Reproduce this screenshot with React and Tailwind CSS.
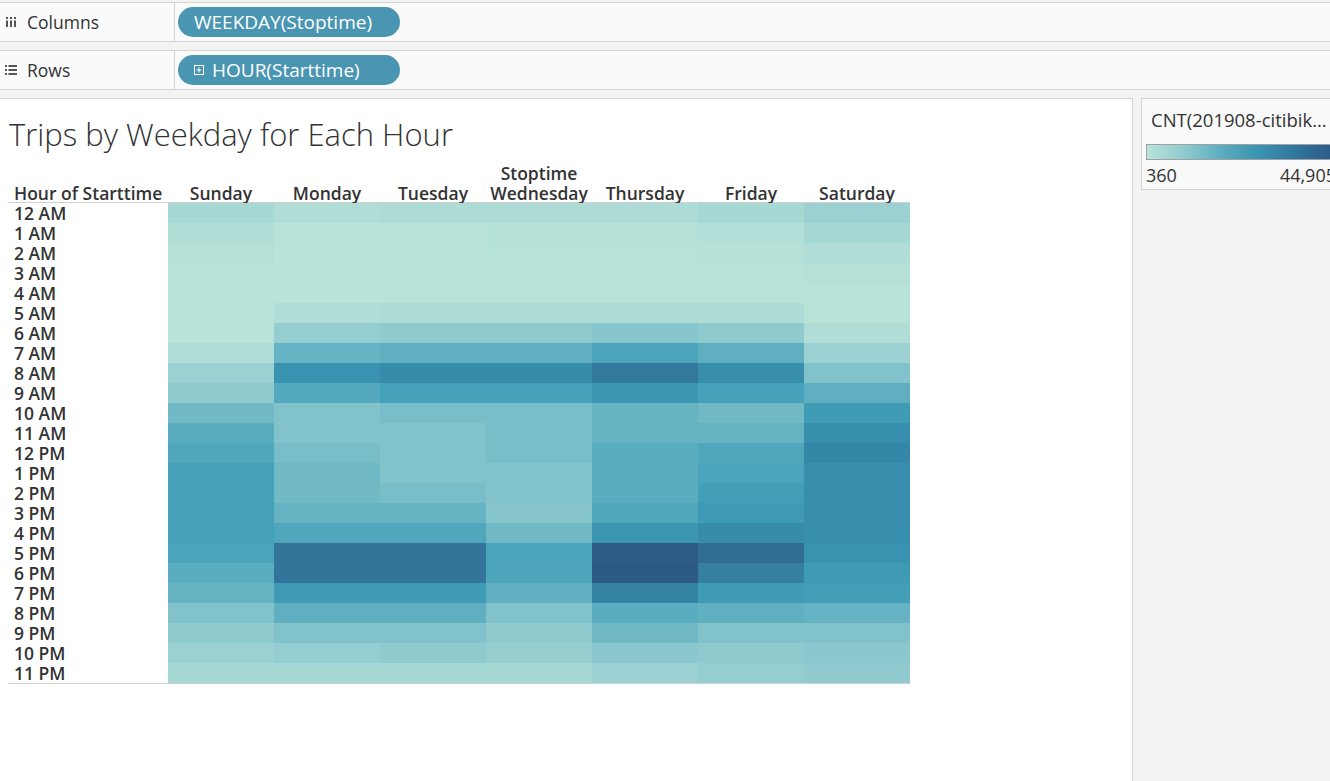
const HOURS = [
  "12 AM", "1 AM", "2 AM", "3 AM", "4 AM", "5 AM", "6 AM", "7 AM", "8 AM", "9 AM", "10 AM", "11 AM",
  "12 PM", "1 PM", "2 PM", "3 PM", "4 PM", "5 PM", "6 PM", "7 PM", "8 PM", "9 PM", "10 PM", "11 PM",
];

// shade level per hour, 0 = fewest trips (360), 20 = most (44,905)
const DAYS = [
  { name: "Sunday", levels: [2, 1, 0.5, 0, 0, 0, 0, 1, 3, 4, 6, 8, 9, 10, 10, 10, 10, 9.5, 8, 7, 5, 4, 3, 2] },
  { name: "Monday", levels: [1, 0, 0, 0, 0, 1, 3.5, 7, 12, 8.5, 5, 5, 5.5, 6, 6, 7, 9, 16, 16, 11, 7.5, 5, 3.5, 2] },
  { name: "Tuesday", levels: [1.3, 0, 0, 0, 0, 1.3, 4, 7.5, 13, 10, 5.5, 5, 5, 5, 5.5, 7, 9, 16, 16, 11, 7.5, 5, 4, 2] },
  { name: "Wednesday", levels: [1.3, 0.3, 0.2, 0, 0, 1.3, 4, 7.5, 13, 10, 5.5, 5.5, 5.5, 5, 5, 4.5, 6, 9.5, 9.3, 7.5, 5, 4, 3.3, 2] },
  { name: "Thursday", levels: [1.3, 0.3, 0.2, 0, 0, 1.3, 4.5, 9.3, 15.5, 11.5, 7, 7, 8, 8, 8, 9, 11.5, 19.5, 20, 14, 8, 6, 4.3, 3] },
  { name: "Friday", levels: [2, 0.7, 0.3, 0, 0, 1.3, 4, 7.5, 12.5, 10, 6, 7, 9, 9.5, 10.3, 11, 13, 17, 14.5, 11, 7.5, 5, 4, 3.5] },
  { name: "Saturday", levels: [3, 2, 1, 0.5, 0, 0, 1, 3, 5, 7.5, 10.8, 12.5, 13.5, 12.5, 12.5, 12.5, 12.5, 12, 11, 10.3, 7, 5, 4.3, 3.8] },
];

const PALETTE = [
  "#b9e3d9", "#a6d8d4", "#8fcacf", "#72b9c6", "#5aacbf", "#45a1b9",
  "#3992b0", "#3483a5", "#32749a", "#30668f", "#2c5985",
];

const hex = (c) => [1, 3, 5].map((i) => parseInt(c.slice(i, i + 2), 16));

function shade(level) {
  const t = Math.min(level / 2, PALETTE.length - 1);
  const i = Math.min(Math.floor(t), PALETTE.length - 2);
  const f = t - i;
  const a = hex(PALETTE[i]);
  const b = hex(PALETTE[i + 1]);
  const mix = a.map((v, k) => Math.round(v + (b[k] - v) * f));
  return `rgb(${mix.join(",")})`;
}

const ColumnsIcon = () => (
  <svg width="11" height="10" viewBox="0 0 11 10" className="fill-[#555]">
    <rect x="0" y="0" width="2" height="2" />
    <rect x="4" y="0" width="2" height="2" />
    <rect x="8" y="0" width="2" height="2" />
    <rect x="0" y="3.5" width="2" height="6.5" />
    <rect x="4" y="3.5" width="2" height="6.5" />
    <rect x="8" y="3.5" width="2" height="6.5" />
  </svg>
);

const RowsIcon = () => (
  <svg width="12" height="10" viewBox="0 0 12 10" className="fill-[#555]">
    <rect x="0" y="0" width="2" height="2" />
    <rect x="3.5" y="0" width="8.5" height="2" />
    <rect x="0" y="4" width="2" height="2" />
    <rect x="3.5" y="4" width="8.5" height="2" />
    <rect x="0" y="8" width="2" height="2" />
    <rect x="3.5" y="8" width="8.5" height="2" />
  </svg>
);

const PlusBox = () => (
  <svg width="10" height="10" viewBox="0 0 10 10" className="stroke-white" fill="none">
    <rect x="0.5" y="0.5" width="9" height="9" />
    <path d="M2.5 5h5M5 2.5v5" />
  </svg>
);

function Shelf({ icon, label, children }) {
  return (
    <div className="flex h-[40px] border-y border-[#d4d4d4] bg-[#fafafa]">
      <div className="flex w-[175px] shrink-0 items-center gap-[10px] border-r border-[#d4d4d4] pl-[5px] text-[17.5px] text-[#333]">
        <span className="flex w-[12px] justify-center">{icon}</span>
        {label}
      </div>
      <div className="flex items-center pl-[3px]">{children}</div>
    </div>
  );
}

function Pill({ children }) {
  return (
    <div className="flex h-[30px] w-[222px] items-center gap-[8px] rounded-full bg-[#4a96b2] px-[16px] text-[19px] whitespace-nowrap text-white">
      {children}
    </div>
  );
}

export default function App() {
  return (
    <div
      className="flex h-[781px] w-[1330px] flex-col overflow-hidden bg-[#f3f3f3] pt-[2px]"
      style={{ fontFamily: "'Open Sans', 'Liberation Sans', sans-serif" }}
    >
      <Shelf icon={<ColumnsIcon />} label="Columns">
        <Pill>WEEKDAY(Stoptime)</Pill>
      </Shelf>
      <div className="mt-[8px]">
        <Shelf icon={<RowsIcon />} label="Rows">
          <Pill>
            <PlusBox />
            HOUR(Starttime)
          </Pill>
        </Shelf>
      </div>

      <div className="mt-[8px] flex flex-1 gap-[8px]">
        {/* viz sheet */}
        <div className="w-[1133px] shrink-0 border-t border-r border-[#d4d4d4] bg-white pl-[8px]">
          <h1 className="mt-[16px] h-[38px] pl-[1px] text-[31px] leading-[38px] font-light text-[#333]">
            Trips by Weekday for Each Hour
          </h1>

          <div className="mt-[10px] w-[902px] text-[17.5px] font-semibold text-[#333]">
            <div className="flex h-[20px] items-center leading-[20px]">
              <div className="w-[160px]" />
              <div className="flex-1 text-center">Stoptime</div>
            </div>
            <div className="flex h-[19px] items-center leading-[20px]">
              <div className="w-[160px] pl-[6px] whitespace-nowrap">Hour of Starttime</div>
              {DAYS.map((d) => (
                <div key={d.name} className="w-[106px] text-center">
                  {d.name}
                </div>
              ))}
            </div>

            <div className="flex border-y border-[#d0d0d0]">
              <div className="w-[160px]">
                {HOURS.map((h) => (
                  <div key={h} className="h-[20px] pl-[6px] leading-[20px]">
                    {h}
                  </div>
                ))}
              </div>
              {DAYS.map((d) => (
                <div key={d.name} className="w-[106px]">
                  {d.levels.map((lv, i) => (
                    <div key={i} className="h-[20px]" style={{ backgroundColor: shade(lv) }} />
                  ))}
                </div>
              ))}
            </div>
          </div>
        </div>

        {/* legend */}
        <div className="h-[92px] w-[200px] shrink-0 border border-[#d4d4d4] bg-[#f9f9f9] px-[4px] text-[#333]">
          <div className="mt-[9px] pl-[5px] text-[18.5px] leading-[24px] whitespace-nowrap">
            CNT(201908-citibik...
          </div>
          <div className="mt-[12px] h-[16px] border border-[#a0a0a0] bg-[linear-gradient(to_right,#b9e3d9,#8fcacf_20%,#5aacbf_40%,#3992b0_60%,#32749a_80%,#2c5985)]" />
          <div className="mt-[4px] flex justify-between text-[18px] leading-[22px]">
            <span>360</span>
            <span>44,905</span>
          </div>
        </div>
      </div>
    </div>
  );
}
